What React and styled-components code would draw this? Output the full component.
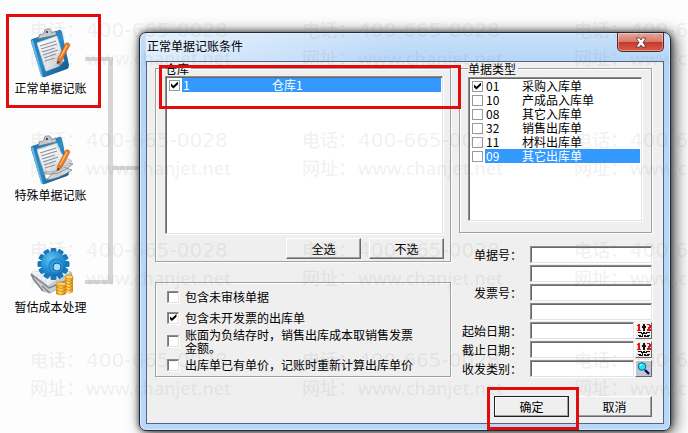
import React from 'react';
import styled, { createGlobalStyle, css } from 'styled-components';

const GlobalStyle = createGlobalStyle`
  * { box-sizing: border-box; }
  body {
    margin: 0;
    background: #fdfdfd;
    color: #000;
    font: 12px/14px "Noto Sans CJK SC", sans-serif;
  }
  button, input { font: inherit; color: inherit; }
`;

const Page = styled.div`
  position: relative;
  display: flex;
  align-items: flex-start;
  min-height: 100vh;
  overflow: hidden;
`;

const Sidebar = styled.nav`
  display: grid;
  grid-template-rows: 107px 112px auto;
  align-items: start;
  width: 101px;
  padding-top: 28px;
`;

const NavItem = styled.button`
  position: relative;
  z-index: 1;
  display: flex;
  flex-direction: column;
  align-items: center;
  gap: 2px;
  padding: 0;
  border: 0;
  background: none;
  line-height: 16px;
  white-space: nowrap;
`;

const Connector = styled.div`
  position: relative;
  width: 28px;
  height: 227px;
  margin: 57px 26px 0 -16px;
  border: solid #d6d6d6;
  border-width: 4px 5px 4px 0;

  &::after {
    content: "";
    position: absolute;
    top: 105px;
    left: 28px;
    width: 26px;
    height: 4px;
    background: #d6d6d6;
  }
`;

const Highlight = styled.span`
  position: absolute;
  inset: ${(p) => p.$inset};
  z-index: 2;
  border: 3px solid #e30b0b;
  pointer-events: none;
`;

const Dialog = styled.section`
  flex: 1;
  min-width: 0;
  margin: 32px 17px 2px 0;
  padding: 0 6px 6px;
  border: 1px solid #1d2a38;
  border-radius: 7px;
  background: linear-gradient(#c9e0f9, #b5d5f8 30px, #b9d8f9);
  box-shadow: inset 0 0 0 1px #dcecfc, 0 0 6px rgba(0, 0, 0, 0.65), 4px 2px 16px rgba(0, 0, 0, 0.65);
  z-index: 1;
`;

const TitleBar = styled.header`
  display: flex;
  align-items: flex-start;
  justify-content: space-between;
  height: 28px;
  background: linear-gradient(90deg, rgba(255, 255, 255, 0.55), transparent 50%);
`;

const Title = styled.h1`
  margin: 0;
  padding-left: 1px;
  font-size: 12px;
  font-weight: 400;
  line-height: 26px;
`;

const CloseButton = styled.button`
  display: grid;
  place-items: center;
  width: 47px;
  height: 19px;
  padding: 0;
  border: 1px solid #5d2622;
  border-top: 0;
  border-radius: 0 0 5px 5px;
  background: linear-gradient(#e9a99a, #d8796a 48%, #c2392a 52%, #d4604a);
  box-shadow: inset 0 0 0 1px rgba(255, 255, 255, 0.35);
`;

const Client = styled.form`
  display: grid;
  grid-template-columns: minmax(0, 1fr) 193px;
  column-gap: 8px;
  row-gap: 19px;
  padding: 0 11px 6px 8px;
  border: 1px solid #53677b;
  background: #efefef;
`;

const Column = styled.div`
  display: flex;
  flex-direction: column;
  gap: ${(p) => p.$gap};
`;

const Group = styled.fieldset`
  position: relative;
  min-width: 0;
  margin: 0;
  padding: ${(p) => p.$pad};
  border: 1px solid #a0a0a0;
  box-shadow: 1px 1px 0 #fff, inset 1px 1px 0 #fff;
`;

const Legend = styled.legend`
  padding: 0 2px 0 0;
  line-height: 13px;
`;

const sunken = css`
  border: 1px solid;
  border-color: #8c8c8c #e3e3e3 #e3e3e3 #8c8c8c;
  box-shadow: inset 1px 1px 0 #696969, 1px 1px 0 #fff;
  background: #fff;
`;

const List = styled.ul`
  height: ${(p) => p.$height};
  margin: 0 1px 0 0;
  padding: 1px;
  list-style: none;
  ${sunken}
`;

const ListRow = styled.label`
  display: grid;
  grid-template-columns: 15px 1fr;
  align-items: center;
  height: 14px;
`;

const RowText = styled.span`
  display: grid;
  grid-template-columns: ${(p) => p.$codeWidth} 1fr;
  height: 14px;
  padding-left: 1px;
  line-height: 13px;
  white-space: nowrap;
  ${(p) => p.$selected && 'background: #3399ff; color: #fff;'}
`;

const CheckBox = styled.input.attrs({ type: 'checkbox' })`
  appearance: none;
  flex: none;
  display: grid;
  place-items: center;
  width: ${(p) => (p.$sunken ? '12px' : '11px')};
  height: ${(p) => (p.$sunken ? '12px' : '11px')};
  margin: 0 0 0 ${(p) => (p.$sunken ? '0' : '2px')};
  border: 1px solid #9a9a9a;
  background: #fff;
  ${(p) => p.$sunken && 'border-color: #8c8c8c #e3e3e3 #e3e3e3 #8c8c8c; box-shadow: inset 1px 1px 0 #777, 1px 1px 0 #fff;'}

  &:checked::before {
    content: "";
    width: 7px;
    height: 7px;
    background: #000;
    clip-path: polygon(0 30%, 35% 62%, 100% 0, 100% 38%, 35% 100%, 0 68%);
  }
`;

const ButtonRow = styled.div`
  display: flex;
  justify-content: flex-end;
  gap: 8px;
  margin-top: ${(p) => p.$top || '0'};
`;

const Footer = styled(ButtonRow)`
  grid-column: 1 / -1;
`;

const PushButton = styled.button`
  width: 75px;
  height: 21px;
  padding: 0;
  border: 1px solid;
  border-color: #fff #696969 #696969 #fff;
  background: #efefef;
  box-shadow: inset -1px -1px 0 #a0a0a0${(p) => p.$primary && ', inset 1px 1px 0 #fff'};
  line-height: 17px;
  ${(p) => p.$primary && 'border-color: #222;'}
`;

const Anchor = styled.div`
  position: relative;
`;

const Option = styled.label`
  display: flex;
  align-items: center;
  gap: 6px;
  min-height: 21px;
  line-height: 13px;
`;

const OptionText = styled.span`
  max-width: 232px;
`;

const Fields = styled.div`
  display: flex;
  flex-direction: column;
  gap: 2px;
`;

const FieldRow = styled.div`
  display: grid;
  grid-template-columns: 63px minmax(0, 1fr) auto;
  align-items: center;
  height: 17px;
`;

const FieldLabel = styled.label`
  justify-self: end;
  white-space: nowrap;
`;

const TextInput = styled.input`
  grid-column: 2;
  min-width: 0;
  width: auto;
  height: 17px;
  margin-left: 8px;
  padding: 0 3px;
  ${sunken}
`;

const IconButton = styled.button`
  display: grid;
  place-items: center;
  width: 17px;
  height: 17px;
  margin-left: 1px;
  padding: 0;
  border: 1px solid;
  border-color: #fff #696969 #696969 #fff;
  background: ${(p) => (p.$gray ? '#c3c7cb' : '#efefef')};
`;

const Watermark = styled.div`
  position: absolute;
  inset: 16px 0 0 30px;
  z-index: 3;
  display: grid;
  grid-template-columns: repeat(3, 272px);
  grid-auto-rows: 110px;
  overflow: hidden;
  color: rgba(110, 110, 110, 0.1);
  font: 500 18px/28px "Noto Sans", "Noto Sans CJK SC", sans-serif;
  white-space: nowrap;
  pointer-events: none;
`;

const WatermarkLine = styled.div`
  display: grid;
  grid-template-columns: 56px auto;
`;

const Phone = styled.span`
  font-family: "DejaVu Sans", sans-serif;
  font-size: 20px;
`;

const Clip = ({ curled }) => (
  <svg width="46" height="50" viewBox="0 0 46 50" aria-hidden="true">
    <defs>
      <linearGradient id={curled ? 'boardB' : 'boardA'} x1="0" y1="0" x2="1" y2="1">
        <stop offset="0" stopColor="#1f6fa8" />
        <stop offset="0.5" stopColor="#2a90cc" />
        <stop offset="1" stopColor="#0f4a7c" />
      </linearGradient>
      <linearGradient id={curled ? 'paperB' : 'paperA'} x1="0" y1="0" x2="1" y2="1">
        <stop offset="0" stopColor="#fff" />
        <stop offset="0.6" stopColor="#e6e8ec" />
        <stop offset="1" stopColor="#b4b8c0" />
      </linearGradient>
    </defs>
    <path d="M4 11 31 2 Q33 1 34 4 L41 37 Q41 40 39 41 L17 49 Q14 50 13 47 L3 14 Q2 12 4 11Z" fill={curled ? 'url(#boardB)' : 'url(#boardA)'} />
    <path d="M3 13 13 48 15 49 5 12Z" fill="#6bb9e4" />
    {curled ? (
      <>
        <path d="M9 14 29 8 32 14 36 36 18 44Z" fill="#fff" />
        <path d="M14 38Q29 43 45 29L37 27 18 45Q31 44 44 35L35 32Z" fill="#d4d7dc" stroke="#777" strokeWidth="0.7" />
        <path d="M9 15 29 8Q31 20 44 26 31 40 16 36 12 27 9 15Z" fill="url(#paperB)" stroke="#a5a9b0" strokeWidth="0.6" />
      </>
    ) : (
      <>
        <path d="M9 15 29 8 36 33 31 38 18 43Z" fill="url(#paperA)" stroke="#d4dde4" strokeWidth="0.7" />
        <path d="M31 38 30 34 36 33Z" fill="#8f949b" />
      </>
    )}
    <path d="M12 18 28 13M13 21 29 16M14 24 27 20M15 27 30 22M16 30 28 26M17 33 27 30" stroke="#8d9299" strokeWidth="1.1" />
    <path d="M10 11 12 6Q14 8 16 5 16 1 19 1 23 0 23 4 25 5 28 3L28 7Z" fill="#c9ced3" stroke="#6d757c" strokeWidth="0.7" />
    <circle cx="19" cy="4" r="1.2" fill="#4c5359" />
    <path d="M38 15Q41 14 42 17L34 32 29 36 30 30Z" fill="#ef7a1d" stroke="#b24d0b" strokeWidth="0.5" />
    <path d="M39 17 32 30" stroke="#ffc27a" strokeWidth="1.3" />
    <path d="M29 36 30 33 32 34Z" fill="#3a2a1a" />
  </svg>
);

const TEETH = [0, 30, 60, 90, 120, 150, 180, 210, 240, 270, 300, 330];

const CostIcon = () => (
  <svg width="46" height="50" viewBox="-2 0 46 50" aria-hidden="true">
    <defs>
      <radialGradient id="gear" cx="0.4" cy="0.3" r="0.8">
        <stop offset="0" stopColor="#62c3f4" />
        <stop offset="0.6" stopColor="#1f8fd6" />
        <stop offset="1" stopColor="#0c5da2" />
      </radialGradient>
      <linearGradient id="coin">
        <stop offset="0" stopColor="#e18a06" />
        <stop offset="0.4" stopColor="#ffe27a" />
        <stop offset="1" stopColor="#d98404" />
      </linearGradient>
    </defs>
    <path d="M1 27 14 22 41 25 43 33 20 46 13 44Z" fill="#c9ccd0" stroke="#8c8f94" strokeWidth="0.6" />
    <path d="M1 27 19 41 43 31M13 44 4 33 1 27M12 39 20 46" fill="none" stroke="#808388" strokeWidth="1.4" />
    <path d="M1 26 14 22 40 25 18 38Z" fill="#f1f2f4" />
    <g fill="#1478bd">
      {TEETH.map((a) => (
        <rect key={a} x="20.5" y="1" width="6" height="9" rx="1.5" transform={`rotate(${a} 23.5 17)`} />
      ))}
    </g>
    <circle cx="23.5" cy="17" r="12.5" fill="url(#gear)" />
    <circle cx="26" cy="19" r="7" fill="#2c9be0" stroke="#1c80c4" strokeWidth="1.2" />
    <circle cx="27" cy="20" r="4" fill="#a3def8" stroke="#0d5c9c" />
    <path d="M26 37v10q5 3 10 0V37Z" fill="url(#coin)" />
    <path d="M35 30v15q4 3 8 0V30Z" fill="url(#coin)" />
    <path d="M26 40q5 3 10 0M26 43q5 3 10 0M26 46q5 3 10 0M35 33q4 3 8 0M35 36q4 3 8 0M35 39q4 3 8 0M35 42q4 3 8 0" fill="none" stroke="#c98004" strokeWidth="0.8" />
    <ellipse cx="31" cy="37" rx="5" ry="2" fill="#ffd75a" stroke="#c97b02" strokeWidth="0.7" />
    <ellipse cx="39" cy="30" rx="4" ry="2" fill="#ffd75a" stroke="#c97b02" strokeWidth="0.7" />
  </svg>
);

const CalendarIcon = () => (
  <svg width="15" height="15" viewBox="0 0 15 15" shapeRendering="crispEdges" aria-hidden="true">
    <path d="M1 2h1V1h2v6h1v1H1V7h1V3H1zM11 1h3v1h-3zM13 2h2v3h-2zM12 4h2v2h-2zM11 6h4v2h-4z" fill="#e11414" />
    <path d="M7 1h2v7H7zM6 3h1v2H6zM9 3h1v2H9zM2 9h4v1H2zM7 9h2v2H7zM10 9h4v1h-4zM5 10h2v1H5zM9 10h2v1H9zM2 12h3v1H2zM6 11h1v2H6zM8 12h2v2H8zM11 12h3v1h-3zM3 13h4v1H3zM10 13h3v1h-3z" fill="#111" />
  </svg>
);

const SearchIcon = () => (
  <svg width="15" height="15" viewBox="0 0 15 15" aria-hidden="true">
    <path d="M9 9 13 13" stroke="#000086" strokeWidth="2.4" />
    <circle cx="6" cy="5.5" r="3.8" fill="#19e6f2" stroke="#0a5fae" />
    <path d="M4 5Q4 3.500 6 3.500" fill="none" stroke="#fff" />
  </svg>
);

const CloseIcon = () => (
  <svg width="12" height="11" viewBox="0 0 12 11" aria-hidden="true">
    <path d="M1 1H4.500L6 3 7.500 1H11L8 5.500 11 10H7.500L6 8 4.500 10H1L4 5.500Z" fill="#fff" stroke="#55342f" strokeWidth="0.8" />
  </svg>
);

const documentTypes = [
  ['01', '采购入库单', true],
  ['10', '产成品入库单'],
  ['08', '其它入库单'],
  ['32', '销售出库单'],
  ['11', '材料出库单'],
  ['09', '其它出库单', false, true],
];

const options = [
  ['包含未审核单据', false],
  ['包含未开发票的出库单', true],
  ['账面为负结存时，销售出库成本取销售发票金额。', false],
  ['出库单已有单价，记账时重新计算出库单价', false],
];

const fields = [
  { id: 'docFrom', label: '单据号：' },
  { id: 'docTo', hidden: '单据号至' },
  { id: 'invoiceFrom', label: '发票号：' },
  { id: 'invoiceTo', hidden: '发票号至' },
  { id: 'startDate', label: '起始日期：', icon: 'date' },
  { id: 'endDate', label: '截止日期：', icon: 'date' },
  { id: 'category', label: '收发类别：', icon: 'search' },
];

function CheckRow({ code, name, checked, selected, codeWidth }) {
  return (
    <li>
      <ListRow>
        <CheckBox defaultChecked={checked} />
        <RowText $selected={selected} $codeWidth={codeWidth}>
          <span>{code}</span>
          <span>{name}</span>
        </RowText>
      </ListRow>
    </li>
  );
}

export default function App() {
  return (
    <Page>
      <GlobalStyle />
      <Sidebar>
        <NavItem type="button">
          <Clip />
          正常单据记账
          <Highlight $inset="-14px 0 -12px 6px" />
        </NavItem>
        <NavItem type="button">
          <Clip curled />
          特殊单据记账
        </NavItem>
        <NavItem type="button">
          <CostIcon />
          暂估成本处理
        </NavItem>
      </Sidebar>
      <Connector />
      <Dialog role="dialog" aria-labelledby="dialog-title">
        <TitleBar>
          <Title id="dialog-title">正常单据记账条件</Title>
          <CloseButton type="button" aria-label="关闭">
            <CloseIcon />
          </CloseButton>
        </TitleBar>
        <Client onSubmit={(e) => e.preventDefault()}>
          <Column $gap="20px">
            <Group $pad="1px 6px 2px 9px">
              <Legend>仓库</Legend>
              <List $height="158px">
                <CheckRow code="1" name="仓库1" checked selected codeWidth="89px" />
              </List>
              <ButtonRow $top="4px">
                <PushButton type="button">全选</PushButton>
                <PushButton type="button">不选</PushButton>
              </ButtonRow>
              <Highlight $inset="-10px -11px 152px 3px" />
            </Group>
            <Group $pad="3px 8px 1px 11px" aria-label="选项">
              {options.map(([text, checked]) => (
                <Option key={text}>
                  <CheckBox $sunken defaultChecked={checked} />
                  <OptionText>{text}</OptionText>
                </Option>
              ))}
            </Group>
          </Column>
          <Column $gap="13px">
            <Group $pad="2px 8px 11px 8px">
              <Legend>单据类型</Legend>
              <List $height="144px">
                {documentTypes.map(([code, name, checked, selected]) => (
                  <CheckRow key={code} code={code} name={name} checked={checked} selected={selected} codeWidth="36px" />
                ))}
              </List>
            </Group>
            <Fields>
              {fields.map(({ id, label, hidden, icon }) => (
                <FieldRow key={id}>
                  {label && <FieldLabel htmlFor={id}>{label}</FieldLabel>}
                  <TextInput id={id} type="text" aria-label={hidden} />
                  {icon && (
                    <IconButton type="button" $gray={icon === 'search'} aria-label={icon === 'date' ? '选择日期' : '查找'}>
                      {icon === 'date' ? <CalendarIcon /> : <SearchIcon />}
                    </IconButton>
                  )}
                </FieldRow>
              ))}
            </Fields>
          </Column>
          <Footer>
            <Anchor>
              <PushButton $primary type="submit">确定</PushButton>
              <Highlight $inset="-9px -10px -13px -7px" />
            </Anchor>
            <PushButton type="button">取消</PushButton>
          </Footer>
        </Client>
      </Dialog>
      <Watermark aria-hidden="true">
        {Array.from({ length: 12 }, (_, i) => (
          <div key={i}>
            <WatermarkLine>
              <span>电话：</span>
              <Phone>400-665-0028</Phone>
            </WatermarkLine>
            <WatermarkLine>
              <span>网址：</span>
              <span>www.chanjet.net</span>
            </WatermarkLine>
          </div>
        ))}
      </Watermark>
    </Page>
  );
}
